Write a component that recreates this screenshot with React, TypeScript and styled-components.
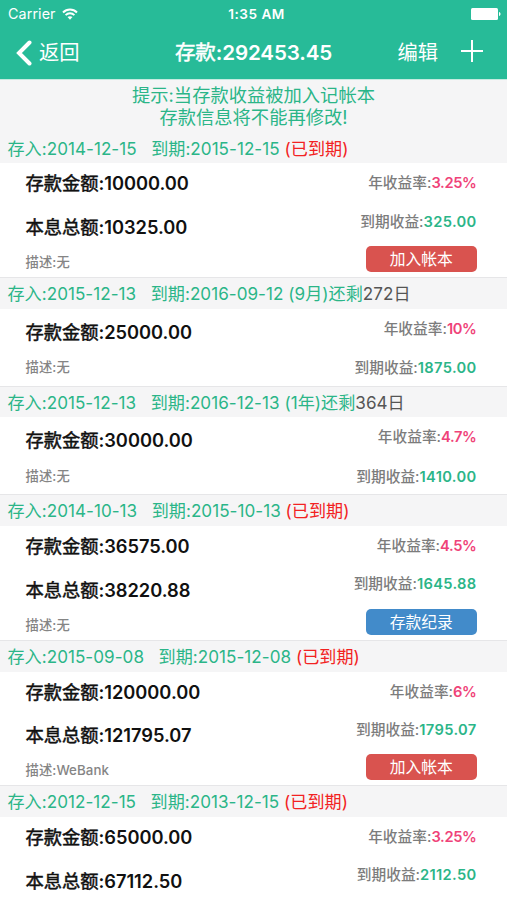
import React from "react";
import styled, { createGlobalStyle } from "styled-components";

const GREEN = "#27bb98";
const TEXT_GREEN = "#2bb588";

const GlobalStyle = createGlobalStyle`
  * { box-sizing: border-box; }
  body {
    margin: 0;
    background: #fff;
    font-family: Inter, "Noto Sans CJK SC", sans-serif;
  }
`;

const Screen = styled.main`
  width: 507px;
  height: 900px;
  overflow: hidden;
  background: #fff;
`;

const Top = styled.header`
  height: 79px;
  background: ${GREEN};
  color: #fff;
`;

const StatusBar = styled.div`
  height: 27px;
  padding: 0 6px 0 8px;
  display: grid;
  grid-template-columns: 1fr auto 1fr;
  align-items: center;
  font-size: 14.3px;
`;

const Carrier = styled.div`
  display: flex;
  align-items: center;
  gap: 6px;
  letter-spacing: 0.1px;
`;

const Clock = styled.div`
  font-weight: 600;
  font-size: 13.6px;
  letter-spacing: 0.5px;
  padding-left: 4px;
`;

const Battery = styled.svg`
  justify-self: end;
`;

const NavBar = styled.nav`
  height: 51px;
  padding: 0 24px 0 15px;
  display: grid;
  grid-template-columns: 1fr auto 1fr;
  align-items: center;
`;

const NavButton = styled.button`
  display: flex;
  align-items: center;
  gap: 6px;
  padding: 0;
  border: 0;
  background: none;
  color: inherit;
  font: inherit;
  font-size: 20.3px;
  line-height: 30px;
`;

const NavActions = styled.div`
  display: flex;
  justify-content: flex-end;
  align-items: center;
  gap: 23px;
`;

const PlusIcon = styled.svg`
  margin-bottom: 3px;
`;

const MediumCjk = styled.span`
  font-weight: 400;
  -webkit-text-stroke: 0.5px currentColor;
`;

const Title = styled.h1`
  margin: 0;
  padding-left: 9px;
  font-size: 20.6px;
  font-weight: 600;
  letter-spacing: -0.14px;
  line-height: 30px;
`;

const Tip = styled.p`
  margin: 0;
  height: 52.5px;
  padding-top: 5px;
  border-top: 1px solid #c4ebe0;
  background: #f5f5f6;
  color: ${TEXT_GREEN};
  text-align: center;
  font-size: 18.3px;
  line-height: 21.5px;
`;

const SectionHeader = styled.h2<{ $first?: boolean }>`
  margin: 0;
  height: 31.8px;
  padding-left: 7.5px;
  border-top: 1px solid ${(p) => (p.$first ? "#f5f5f6" : "#e6e6e8")};
  background: #f5f5f6;
  color: ${TEXT_GREEN};
  font-size: 17.1px;
  font-weight: 400;
  letter-spacing: 0.03px;
  line-height: 31px;
  white-space: pre;
`;

const Status = styled.span<{ $expired?: boolean }>`
  color: ${(p) => (p.$expired ? "#f22222" : "#555")};
`;

const Cell = styled.div<{ $tall?: boolean }>`
  height: ${(p) => (p.$tall ? 113.7 : 76.9)}px;
  padding: 0 30.5px 0 25.5px;
  display: flex;
  justify-content: space-between;
`;

const Left = styled.div<{ $tall?: boolean }>`
  display: flex;
  flex-direction: column;
  gap: ${(p) => (p.$tall ? 15.5 : 11.5)}px;
  padding-top: ${(p) => (p.$tall ? 6 : 9)}px;
`;

const Right = styled.div<{ $tall?: boolean }>`
  display: flex;
  flex-direction: column;
  align-items: flex-end;
  padding-top: 10px;
  gap: ${(p) => (p.$tall ? 18.3 : 19.3)}px;
`;

const Amount = styled.div`
  height: 28px;
  color: #111;
  font-size: 18.3px;
  font-weight: 600;
  letter-spacing: -0.04px;
  line-height: 28px;
`;

const Note = styled.div<{ $tall?: boolean }>`
  margin-top: ${(p) => (p.$tall ? -4.5 : 0)}px;
  color: #858585;
  font-size: 13.3px;
  font-weight: 500;
  letter-spacing: 0.08px;
  line-height: 20px;
`;

const Figure = styled.div`
  height: 20px;
  color: #7c7c7c;
  font-size: 14.7px;
  font-weight: 500;
  line-height: 20px;
`;

const Value = styled.span<{ $rate?: boolean }>`
  color: ${(p) => (p.$rate ? "#ef4379" : TEXT_GREEN)};
  font-weight: 600;
  letter-spacing: ${(p) => (p.$rate ? -0.35 : 0.32)}px;
`;

const Action = styled.button<{ $blue?: boolean }>`
  width: 110.5px;
  height: 26px;
  margin-top: -4px;
  padding: 1px 0 0;
  border: 0;
  border-radius: 5px;
  background: ${(p) => (p.$blue ? "#428bca" : "#d9534f")};
  color: #fff;
  font: inherit;
  font-size: 15.8px;
  line-height: 25px;
`;

type Deposit = {
  from: string;
  to: string;
  term?: string;
  days?: string;
  amount: string;
  total?: string;
  note?: string;
  rate: string;
  profit: string;
  action?: "join" | "record";
};

const deposits: Deposit[] = [
  { from: "2014-12-15", to: "2015-12-15", amount: "10000.00", total: "10325.00", note: "无", rate: "3.25%", profit: "325.00", action: "join" },
  { from: "2015-12-13", to: "2016-09-12", term: "9月", days: "272", amount: "25000.00", note: "无", rate: "10%", profit: "1875.00" },
  { from: "2015-12-13", to: "2016-12-13", term: "1年", days: "364", amount: "30000.00", note: "无", rate: "4.7%", profit: "1410.00" },
  { from: "2014-10-13", to: "2015-10-13", amount: "36575.00", total: "38220.88", note: "无", rate: "4.5%", profit: "1645.88", action: "record" },
  { from: "2015-09-08", to: "2015-12-08", amount: "120000.00", total: "121795.07", note: "WeBank", rate: "6%", profit: "1795.07", action: "join" },
  { from: "2012-12-15", to: "2013-12-15", amount: "65000.00", total: "67112.50", rate: "3.25%", profit: "2112.50" },
];

function DepositSection({ d, first }: { d: Deposit; first: boolean }) {
  const tall = Boolean(d.total);
  return (
    <section>
      <SectionHeader $first={first}>
        {`存入:${d.from}   到期:${d.to} `}
        {d.term ? (
          <>
            {`(${d.term})还剩`}
            <Status>{`${d.days}日`}</Status>
          </>
        ) : (
          <Status $expired>(已到期)</Status>
        )}
      </SectionHeader>
      <Cell $tall={tall}>
        <Left $tall={tall}>
          <Amount><MediumCjk>存款金额</MediumCjk>:{d.amount}</Amount>
          {d.total && <Amount><MediumCjk>本息总额</MediumCjk>:{d.total}</Amount>}
          {d.note && <Note $tall={tall}>描述:{d.note}</Note>}
        </Left>
        <Right $tall={tall}>
          <Figure>年收益率:<Value $rate>{d.rate}</Value></Figure>
          <Figure>到期收益:<Value>{d.profit}</Value></Figure>
          {d.action && (
            <Action $blue={d.action === "record"}>
              {d.action === "record" ? "存款纪录" : "加入帐本"}
            </Action>
          )}
        </Right>
      </Cell>
    </section>
  );
}

export default function App() {
  return (
    <Screen>
      <GlobalStyle />
      <Top>
        <StatusBar>
          <Carrier>
            Carrier
            <svg width="16" height="12" viewBox="0 0 16 12" fill="none" stroke="#fff" strokeWidth="2">
              <path d="M1 4.500C5 .6 11 .6 15 4.500M3.600 7.100c2.500-2.400 6.300-2.400 8.800 0" />
              <path d="M5.500 9.100c1.500-1.300 3.500-1.300 5 0L8 11.800z" fill="#fff" stroke="none" />
            </svg>
          </Carrier>
          <Clock>1:35 AM</Clock>
          <Battery width="30" height="12" viewBox="0 0 30 12" fill="#fff">
            <rect x="0" y="0" width="27" height="12" rx="1.5" />
            <path d="M28 4c2 .6 2 3.4 0 4z" />
          </Battery>
        </StatusBar>
        <NavBar>
          <NavButton>
            <svg width="18" height="26" viewBox="0 0 18 26" fill="none" stroke="#fff" strokeWidth="4" strokeLinecap="round">
              <path d="M14.500 2.500 4 13l10.500 10.500" />
            </svg>
            返回
          </NavButton>
          <Title><MediumCjk>存款</MediumCjk>:292453.45</Title>
          <NavActions>
            <NavButton>编辑</NavButton>
            <PlusIcon width="22" height="22" viewBox="0 0 22 22" fill="none" stroke="#fff" strokeWidth="2">
              <path d="M11 0v22M0 11h22" />
            </PlusIcon>
          </NavActions>
        </NavBar>
      </Top>
      <Tip>
        提示:当存款收益被加入记帐本
        <br />
        存款信息将不能再修改!
      </Tip>
      {deposits.map((d, i) => (
        <DepositSection key={d.from + d.to} d={d} first={i === 0} />
      ))}
    </Screen>
  );
}
